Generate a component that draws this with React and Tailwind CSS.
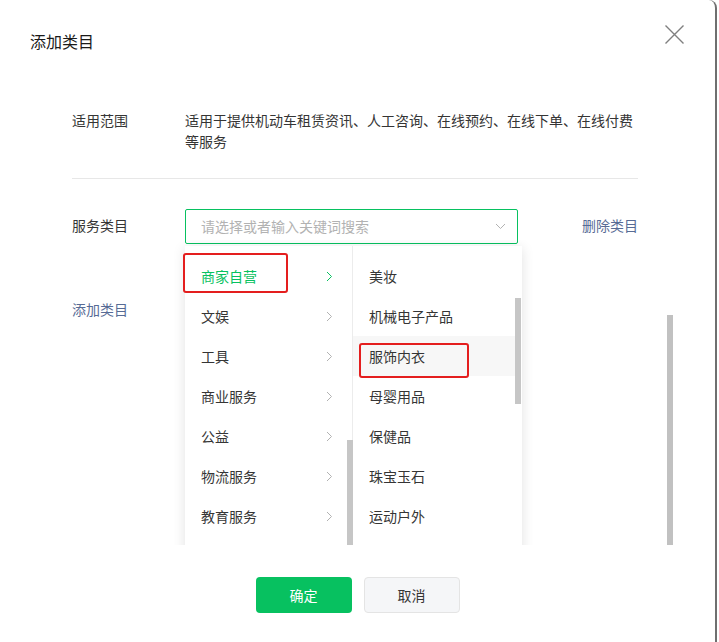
const parents = ['商家自营', '文娱', '工具', '商业服务', '公益', '物流服务', '教育服务'];
const children = ['美妆', '机械电子产品', '服饰内衣', '母婴用品', '保健品', '珠宝玉石', '运动户外'];

function ChevronRight({ active }) {
  return (
    <svg width="7" height="11" viewBox="0 0 7 11" fill="none" className="shrink-0">
      <path d="M1 1l4.5 4.5L1 10" stroke={active ? '#07c160' : '#b2b2b2'} strokeWidth="1" />
    </svg>
  );
}

function CascadePanel() {
  return (
    <div className="absolute left-[170px] top-[240px] h-[305px] w-[367px] overflow-hidden">
      <div className="ml-[15px] mt-[6px] flex h-[330px] w-[337px] bg-white shadow-[0_2px_12px_rgba(0,0,0,0.12)]">
        <div className="relative w-[168px] border-r border-[#ececec] pt-[10px]">
          {parents.map((name, i) => (
            <div key={name} className="flex h-[40px] items-center justify-between pl-[16px] pr-[19px]">
              <span className={i === 0 ? 'text-[#07c160]' : 'text-[#353535]'}>{name}</span>
              <ChevronRight active={i === 0} />
            </div>
          ))}
          <div className="absolute left-[162px] top-[194px] h-[140px] w-[6px] bg-[#c6c6c6]" />
        </div>
        <div className="relative w-[168px] pt-[10px]">
          {children.map((name, i) => (
            <div
              key={name}
              className={`flex h-[40px] w-[162px] items-center pl-[16px] text-[#353535] ${i === 2 ? 'bg-[#f7f7f7]' : ''}`}
            >
              {name}
            </div>
          ))}
          <div className="absolute left-[162px] top-[52px] h-[106px] w-[6px] bg-[#c6c6c6]" />
        </div>
      </div>
    </div>
  );
}

export default function App() {
  return (
    <div
      className="h-[642px] w-[719px] bg-white pr-[2px] text-[14px] leading-[21px] text-[#353535]"
      style={{ fontFamily: '"Noto Sans CJK SC", "Microsoft YaHei", sans-serif' }}
    >
      <div className="relative flex h-full w-[717px] flex-col rounded-tr-[8px] border-r-[2px] border-[#6f6f6f]">
        <div className="flex items-start justify-between pl-[30px] pr-[31px] pt-[30px]">
          <h2 className="text-[16px] leading-[22px] text-[#1a1a1a]">添加类目</h2>
          <button type="button" className="-mt-[5px]" aria-label="关闭">
            <svg width="19" height="19" viewBox="0 0 19 19" fill="none">
              <path d="M0.5 0.5l18 18M18.5 0.5l-18 18" stroke="#7f7f7f" strokeWidth="1.4" />
            </svg>
          </button>
        </div>

        <div className="mt-[58px] pl-[72px] pr-[77px]">
          <div className="flex">
            <span className="w-[113px] shrink-0">适用范围</span>
            <p className="w-[453px]">适用于提供机动车租赁资讯、人工咨询、在线预约、在线下单、在线付费等服务</p>
          </div>

          <div className="mt-[26px] border-t border-[#e7e7e7]" />

          <div className="mt-[30px] flex h-[35px] items-center">
            <span className="-mt-[2px] w-[113px] shrink-0">服务类目</span>
            <div className="flex h-[35px] w-[333px] items-center justify-between rounded-[2px] border border-[#07c160] pl-[15px] pr-[11px]">
              <span className="-mt-[1px] text-[#b2b2b2]">请选择或者输入关键词搜索</span>
              <svg width="11" height="7" viewBox="0 0 11 7" fill="none">
                <path d="M1 1l4.5 4.5L10 1" stroke="#b2b2b2" strokeWidth="1" />
              </svg>
            </div>
            <span className="-mt-[2px] ml-auto text-[#576b95]">删除类目</span>
          </div>

          <div className="mt-[55px] text-[#576b95]">添加类目</div>
        </div>

        <div className="mt-auto flex justify-center gap-[12px] pb-[29px]">
          <button type="button" className="h-[36px] w-[96px] rounded-[4px] bg-[#07c160] text-white">
            确定
          </button>
          <button
            type="button"
            className="h-[36px] w-[96px] rounded-[4px] border border-[#e4e4e4] bg-[#f5f6f8] text-[#353535]"
          >
            取消
          </button>
        </div>

        <CascadePanel />

        <div className="absolute left-[667px] top-[315px] h-[230px] w-[6px] bg-[#c1c1c1]" />

        <div className="absolute left-[183px] top-[253px] h-[40px] w-[105px] rounded-[3px] border-[2px] border-[#e41e1e]" />
        <div className="absolute left-[359px] top-[343px] h-[35px] w-[110px] rounded-[3px] border-[2px] border-[#e41e1e]" />
      </div>
    </div>
  );
}
